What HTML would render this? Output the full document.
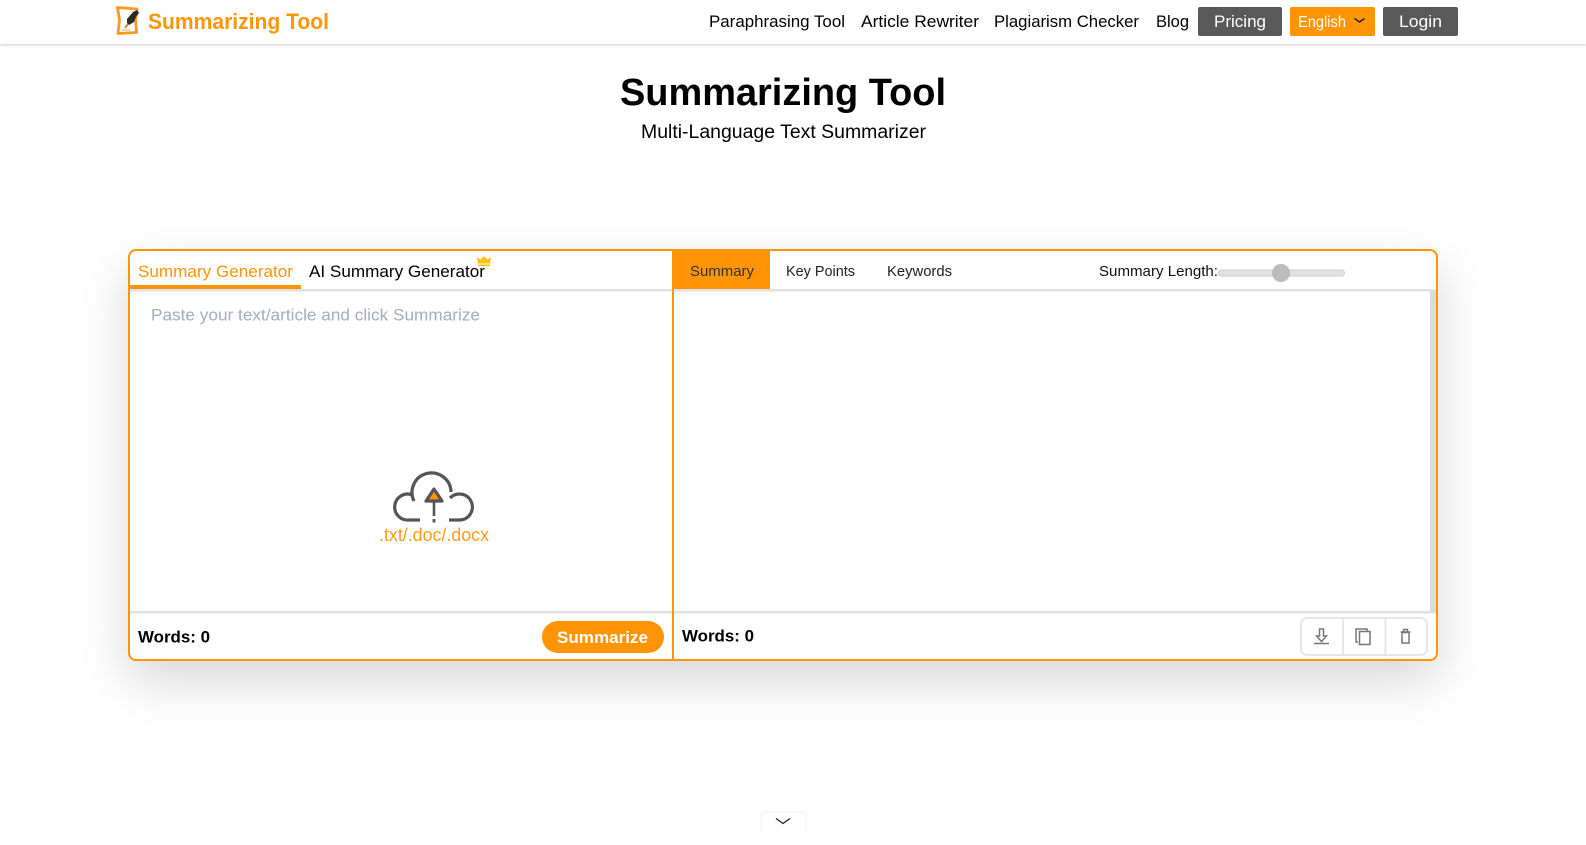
<!DOCTYPE html>
<html lang="en"><head><meta charset="utf-8"><title>Summarizing Tool</title>
<style>
html,body{margin:0;padding:0;width:1586px;height:845px;overflow:hidden;background:#fff}
.hdr{position:absolute;left:0;top:0;width:1586px;height:44px;background:#fff;box-shadow:0 1px 3px rgba(0,0,0,.2)}
.panel{position:absolute;left:128px;top:249px;width:1310px;height:412px;box-sizing:border-box;background:#fff;border-radius:8px;box-shadow:0 20px 50px rgba(0,0,0,.16)}
svg{position:absolute;left:0;top:0}
text{font-family:"Liberation Sans",sans-serif;fill:#000;font-size:17px}
</style></head><body>
<div class="hdr"></div>
<div class="panel"></div>
<svg width="1586" height="845" viewBox="0 0 1586 845" xmlns="http://www.w3.org/2000/svg">
<!-- logo -->
<path d="M117.500 7.500 L137 9 L135.500 20 L136.500 32.500 L118 33.500 L119.500 20 Z" fill="#fff" stroke="#ff9a1f" stroke-width="2.800" stroke-linejoin="round"/>
<path d="M127 19 L133 12 L137 10 L139 13 L136 17 L134 22 L129 25 L127 23 Z" fill="#2a2a2a"/>
<path d="M128 24 L125 28" stroke="#b98a50" stroke-width="2"/>
<path d="M122 30h8" stroke="#f5c48a" stroke-width="1.500"/>
<text x="148" y="29" style="font-size:22px;font-weight:700;fill:#ff9507" textLength="181" lengthAdjust="spacingAndGlyphs">Summarizing Tool</text>
<!-- nav -->
<text x="709" y="27" textLength="136" lengthAdjust="spacingAndGlyphs">Paraphrasing Tool</text>
<text x="861" y="27" textLength="118" lengthAdjust="spacingAndGlyphs">Article Rewriter</text>
<text x="994" y="27" textLength="145" lengthAdjust="spacingAndGlyphs">Plagiarism Checker</text>
<text x="1156" y="27" textLength="33" lengthAdjust="spacingAndGlyphs">Blog</text>
<rect x="1198" y="7" width="84" height="29" rx="2" fill="#595959"/>
<text x="1214" y="27" style="fill:#fff" textLength="52" lengthAdjust="spacingAndGlyphs">Pricing</text>
<rect x="1290" y="7" width="85" height="29" rx="2" fill="#ff9505"/>
<text x="1298" y="27" style="fill:#fff;font-size:16px" textLength="48" lengthAdjust="spacingAndGlyphs">English</text>
<path d="M1354.500 18.500l5 3.500 5-3.500" fill="none" stroke="#222" stroke-width="1.500"/>
<rect x="1383" y="7" width="75" height="29" rx="2" fill="#595959"/>
<text x="1399" y="27" style="fill:#fff" textLength="43" lengthAdjust="spacingAndGlyphs">Login</text>
<!-- title -->
<text x="620" y="105" style="font-size:38px;font-weight:700" textLength="326" lengthAdjust="spacingAndGlyphs">Summarizing Tool</text>
<text x="641" y="138" style="font-size:19px" textLength="285" lengthAdjust="spacingAndGlyphs">Multi-Language Text Summarizer</text>
<!-- panel dividers -->
<rect x="129" y="289" width="1308" height="2.500" fill="#e0e0e0"/>
<rect x="129" y="611" width="1308" height="2.500" fill="#e0e0e0"/>
<rect x="1430" y="291" width="6" height="320" fill="#dcdcdc"/>
<!-- left tabs -->
<text x="138" y="277" style="fill:#ff9507" textLength="155" lengthAdjust="spacingAndGlyphs">Summary Generator</text>
<rect x="129" y="285" width="172" height="4" fill="#ff9505"/>
<text x="309" y="277" textLength="176" lengthAdjust="spacingAndGlyphs">AI Summary Generator</text>
<path d="M478 263.500 L477 257 L480.500 259.500 L484 256 L487.500 259.500 L491 257 L490 263.500 Z" fill="#ffc20e"/>
<rect x="478" y="264.500" width="12" height="1.600" fill="#ffc20e"/>
<text x="151" y="320.500" style="fill:#a0aec0" textLength="329" lengthAdjust="spacingAndGlyphs">Paste your text/article and click Summarize</text>
<!-- right tabs -->
<rect x="672" y="250" width="98" height="39" fill="#ff9505"/>
<text x="690" y="276" style="font-size:15px;fill:#333" textLength="64" lengthAdjust="spacingAndGlyphs">Summary</text>
<text x="786" y="276" style="font-size:15px;fill:#222" textLength="69" lengthAdjust="spacingAndGlyphs">Key Points</text>
<text x="887" y="276" style="font-size:15px;fill:#222" textLength="65" lengthAdjust="spacingAndGlyphs">Keywords</text>
<text x="1099" y="276" style="font-size:15px;fill:#111" textLength="119" lengthAdjust="spacingAndGlyphs">Summary Length:</text>
<rect x="1218.500" y="270" width="126" height="6" rx="3" fill="#e2e2e2" stroke="#cfcfcf"/>
<circle cx="1281" cy="273" r="9" fill="#bcbcbc"/>
<!-- cloud upload -->
<g fill="none" stroke="#555" stroke-width="3.200">
<path d="M411 494.500 A13 13 0 1 0 409 520 L420 520"/>
<path d="M414 501 A19.500 19.500 0 1 1 451 492"/>
<path d="M450 498 A13 13 0 1 1 460 520 L449 520"/>
</g>
<path d="M434 489 L442 501 L426 501 Z" fill="#ff9505" stroke="#555" stroke-width="3.200" stroke-linejoin="round"/>
<path d="M434 502 V516" stroke="#555" stroke-width="2.600"/>
<rect x="432.600" y="519" width="2.800" height="3.500" fill="#555"/>
<text x="379" y="541" style="fill:#ff9b1a;font-size:18px" textLength="110" lengthAdjust="spacingAndGlyphs">.txt/.doc/.docx</text>
<!-- footer -->
<text x="138" y="642.500" style="font-weight:700" textLength="72" lengthAdjust="spacingAndGlyphs">Words: 0</text>
<rect x="542" y="621" width="122" height="32" rx="16" fill="#ff9505"/>
<text x="557" y="643" style="fill:#fff;font-weight:700" textLength="91" lengthAdjust="spacingAndGlyphs">Summarize</text>
<text x="682" y="641.500" style="font-weight:700" textLength="72" lengthAdjust="spacingAndGlyphs">Words: 0</text>
<!-- action group -->
<rect x="1301" y="618" width="126" height="37" rx="6" fill="#fff" stroke="#e6e6e6" stroke-width="2"/>
<path d="M1343 618V655M1385.500 618V655" stroke="#e6e6e6" stroke-width="2"/>
<g fill="none" stroke="#777" stroke-width="1.500">
<path d="M1319.500 629h4v7h3l-5 5.500-5-5.500h3z"/>
<path d="M1314 643.500h15"/>
<path d="M1358 642h-2v-13h11v2"/>
<rect x="1359.500" y="631.500" width="10.500" height="13"/>
<path d="M1400.500 632h10M1403.500 631.500v-2h4v2"/>
<rect x="1402" y="632.500" width="7" height="10.500"/>
</g>
<!-- bottom expander -->
<path d="M761 832V816Q761 812 765 812H802Q806 812 806 816V832" fill="#fff" stroke="#f6f6f6" stroke-width="1.500"/>
<path d="M776 818.500l7 5 7-5" fill="none" stroke="#222" stroke-width="1.300"/>
<!-- panel border -->
<rect x="129" y="250" width="1308" height="410" rx="7" fill="none" stroke="#ff9505" stroke-width="2"/>
<path d="M673 250V660" stroke="#ff9505" stroke-width="2"/>
</svg>
</body></html>
